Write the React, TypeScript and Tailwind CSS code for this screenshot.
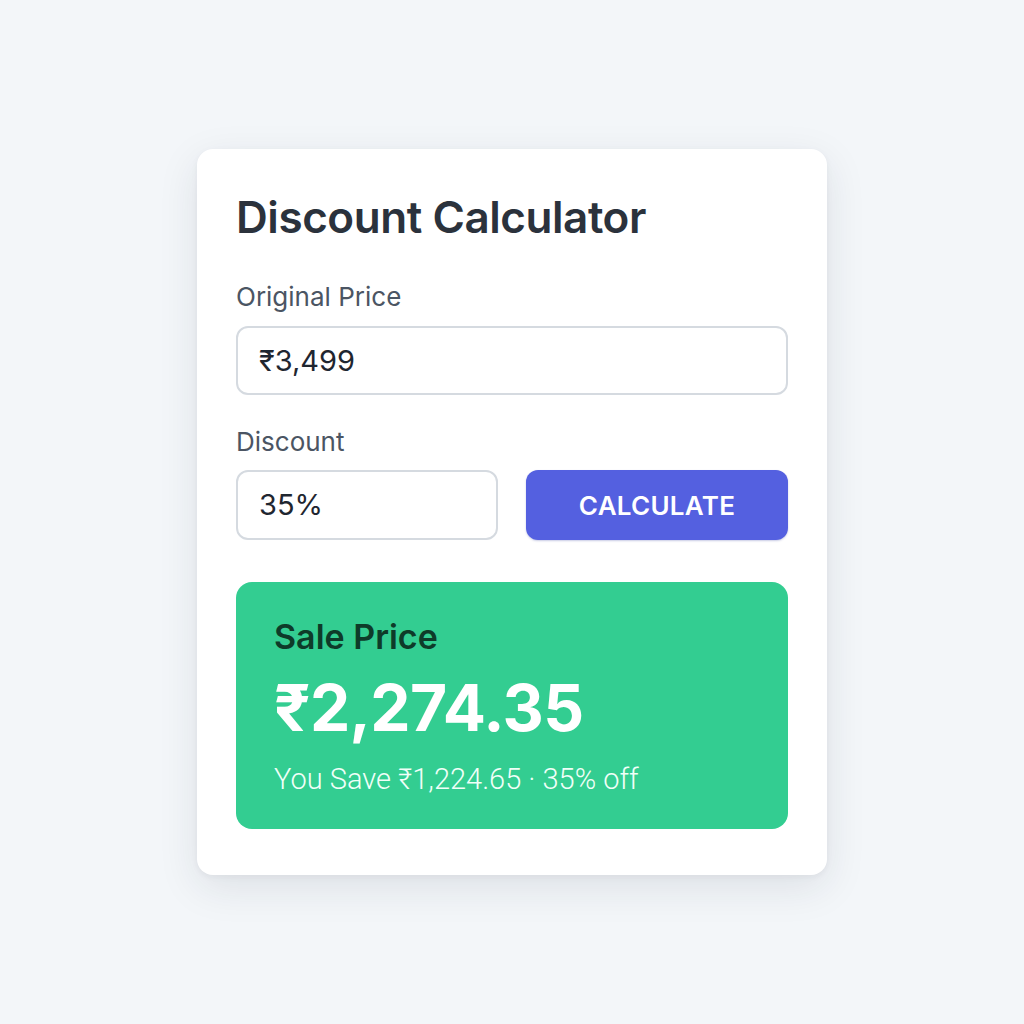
export default function App() {
  return (
    <div className="flex min-h-screen w-full items-start justify-center bg-[#f3f6f9] pt-[149px] font-['Inter','Noto_Sans',sans-serif]">
      <div className="w-[630px] rounded-[16px] bg-white px-[39px] pb-[46px] pt-[42px] shadow-[0_12px_40px_rgba(30,41,59,0.10),0_2px_6px_rgba(30,41,59,0.05)]">
        <h1 className="text-[44px] font-semibold leading-[52px] tracking-[-0.01em] text-[#2b323c]">
          Discount Calculator
        </h1>

        <label className="mt-[37px] block text-[26px] leading-[34px] text-[#4b5563]">Original Price</label>
        <div className="mt-[12px] flex h-[69px] items-center rounded-[12px] border-2 border-[#d5dae0] bg-white px-[21px] text-[29px] text-[#1f2630]">
          ₹3,499
        </div>

        <label className="mt-[30px] block text-[26px] leading-[34px] text-[#4b5563]">Discount</label>
        <div className="mt-[11px] flex justify-between">
          <div className="flex h-[70px] w-[262px] items-center rounded-[12px] border-2 border-[#d5dae0] bg-white px-[21px] text-[29px] text-[#1f2630]">
            35%
          </div>
          <button className="flex h-[70px] w-[262px] items-center justify-center rounded-[12px] bg-[#5460e0] text-[26px] font-semibold tracking-[0.01em] text-white shadow-[0_1px_2px_rgba(40,50,150,0.25)]">
            CALCULATE
          </button>
        </div>

        <div className="mt-[42px] rounded-[16px] bg-[#33cd91] px-[38px] pb-[33px] pt-[35px]">
          <div className="text-[34px] font-semibold leading-[40px] text-[#0e3b29]">Sale Price</div>
          <div className="mt-[15px] text-[64px] font-bold leading-[72px] tracking-[-0.01em] text-white">₹2,274.35</div>
          <div className="mt-[18px] font-['Roboto',sans-serif] text-[29px] font-light leading-[34px] text-[#f0fff8]">
            You Save ₹1,224.65 · 35% off
          </div>
        </div>
      </div>
    </div>
  );
}
